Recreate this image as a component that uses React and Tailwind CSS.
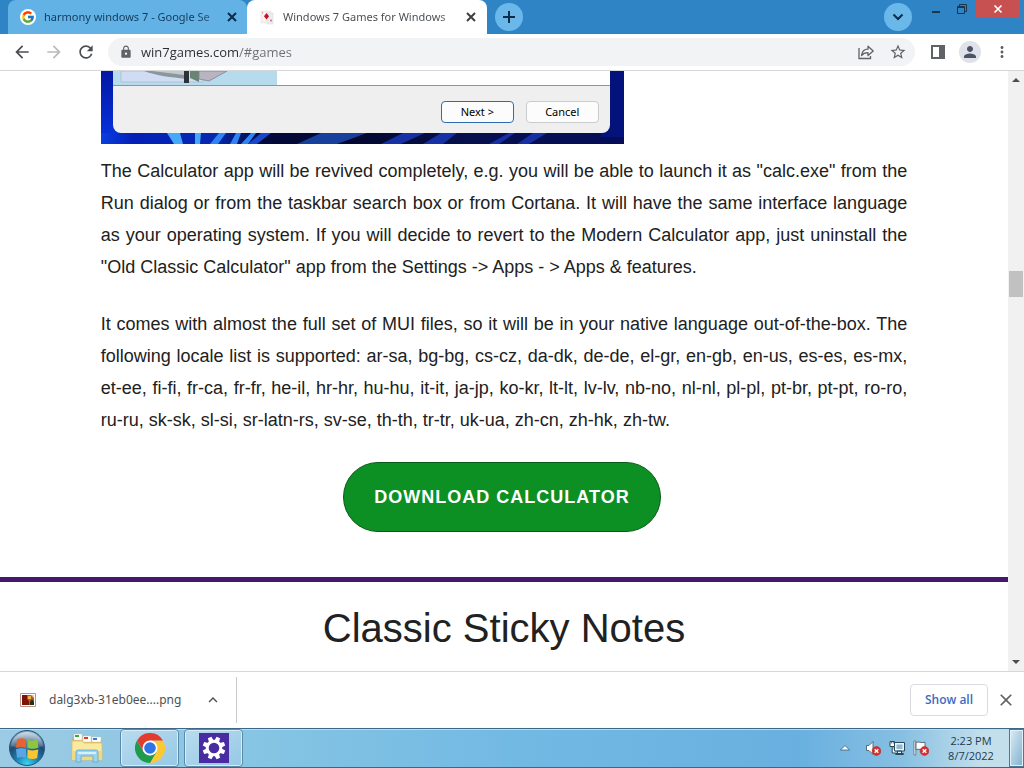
import React from "react";
import { FcGoogle } from "react-icons/fc";
import {
  MdArrowBack,
  MdArrowForward,
  MdRefresh,
  MdLock,
  MdStarBorder,
  MdPerson,
  MdMoreVert,
  MdClose,
  MdKeyboardArrowUp,
} from "react-icons/md";

const chromeFont = "font-['Open_Sans','Noto_Sans',sans-serif]";

function StrokeIcon({ d }) {
  return (
    <svg viewBox="0 0 14 14" className="h-[14px] w-[14px]" fill="none" stroke="currentColor" strokeWidth="2" aria-hidden="true">
      <path d={d} />
    </svg>
  );
}

const CROSS = "M3 3l8 8M11 3l-8 8";
const PLUS = "M7 1v12M1 7h12";
const CHEVRON = "M2.500 4.500 7 9l4.500-4.500";

function CardsIcon() {
  return (
    <svg viewBox="0 0 16 16" className="h-4 w-4 shrink-0" aria-hidden="true">
      <rect x="2" y="2" width="10" height="12" fill="#f4f1f3" stroke="#e6e1e5" strokeWidth=".6" />
      <rect x="8" y="4" width="6" height="11" fill="#ececf0" stroke="#dcd9e0" strokeWidth=".6" />
      <path d="M7.500 4 10 7.200 7.500 10.400 5 7.200z" fill="#c2121f" />
      <path d="M12 10l1 1.500-1 1.600-1-1.600z" fill="#d46a70" />
      <circle cx="3.500" cy="3.800" r=".7" fill="#d8888c" />
    </svg>
  );
}

function ShareIcon() {
  return (
    <svg viewBox="0 0 18 18" className="h-[18px] w-[18px]" fill="none" stroke="#5f6368" strokeWidth="1.3" aria-hidden="true">
      <path d="M2 5v10.500h11.500V13" />
      <path d="M4.500 12.500C5 8.500 7 6.200 11 6.200V3.200L16.200 8l-5.200 4.600V9.700C8 9.700 6 10.500 4.500 12.500z" strokeLinejoin="round" />
    </svg>
  );
}

function TabStrip() {
  return (
    <header className="flex h-[34px] shrink-0 items-stretch bg-[#2e84c5]">
      <nav className="flex items-stretch pl-2" aria-label="Tabs">
        <div className="flex w-[239px] items-center rounded-t-lg bg-[#62b2e6] pr-[7px] pl-3">
          <span className="flex h-4 w-4 shrink-0 items-center justify-center rounded-full bg-white">
            <FcGoogle size={14} />
          </span>
          <a href="#search" className="ml-2 min-w-0 flex-1 bg-linear-to-r from-[#123a5c] from-85% to-[#123a5c]/30 bg-clip-text font-['Noto_Sans',sans-serif] text-[11px] leading-4 whitespace-nowrap text-transparent">
            harmony windows 7 - Google Se
          </a>
          <button aria-label="Close harmony windows 7" className="flex h-4 w-4 shrink-0 items-center justify-center text-[#0c2c48]">
            <StrokeIcon d={CROSS} />
          </button>
        </div>
        <div className="flex w-60 items-center rounded-t-lg bg-white pr-2 pl-3">
          <CardsIcon />
          <a href="#games" className="ml-2 min-w-0 flex-1 bg-linear-to-r from-[#45494d] from-85% to-[#45494d]/40 bg-clip-text font-['Noto_Sans',sans-serif] text-[11px] leading-4 whitespace-nowrap text-transparent">
            Windows 7 Games for Windows
          </a>
          <button aria-label="Close Windows 7 Games" className="flex h-4 w-4 shrink-0 items-center justify-center text-[#3c4043]">
            <StrokeIcon d={CROSS} />
          </button>
        </div>
      </nav>
      <button aria-label="New tab" className="ml-2 flex h-7 w-7 items-center justify-center self-center rounded-full bg-[#6ab8ea] text-[#0c2c48]">
        <StrokeIcon d={PLUS} />
      </button>
      <button aria-label="Search tabs" className="ml-auto flex h-7 w-7 items-center justify-center self-center rounded-full bg-[#6ab8ea] text-[#0c2c48]">
        <StrokeIcon d={CHEVRON} />
      </button>
      <div className="ml-3 flex items-start">
        <button aria-label="Minimize" className="flex h-[18px] w-6 items-center justify-center">
          <svg viewBox="0 0 10 10" className="h-[10px] w-[10px]" aria-hidden="true"><path d="M1 7h8v2H1z" fill="#17364f" /></svg>
        </button>
        <button aria-label="Restore" className="flex h-[18px] w-7 items-center justify-center">
          <svg viewBox="0 0 10 10" className="h-[10px] w-[10px]" fill="none" stroke="#17364f" aria-hidden="true">
            <path d="M.5 2.500h7v7h-7zM.5 3.500h7M2.500 2.500v-2h7v7h-2" />
          </svg>
        </button>
        <div className="pr-1">
          <button aria-label="Close" className="flex h-[18px] w-11 items-center justify-center bg-[#c75050]">
            <svg viewBox="0 0 10 10" className="h-[10px] w-[10px]" stroke="#fff" strokeWidth="1.700" aria-hidden="true">
              <path d="M1.500 1.500l7 7M8.500 1.500l-7 7" />
            </svg>
          </button>
        </div>
      </div>
    </header>
  );
}

function Toolbar() {
  return (
    <div className="flex h-[37px] shrink-0 items-center border-b border-[#d5d7da] bg-white pr-[13px] pl-3 text-[#5f6368]">
      <button aria-label="Back" className="mr-3 text-[#4a4d51]"><MdArrowBack size={20} /></button>
      <button aria-label="Forward" className="mr-3 text-[#b9bbbe]"><MdArrowForward size={20} /></button>
      <button aria-label="Reload" className="mr-3 text-[#4a4d51]"><MdRefresh size={20} /></button>
      <div className="flex h-7 flex-1 items-center rounded-full bg-[#f1f3f4] pr-2 pl-[11px]">
        <MdLock size={14} className="shrink-0" />
        <input
          aria-label="Address"
          defaultValue="win7games.com/#games"
          className="ml-2 block h-5 min-w-0 flex-1 bg-linear-to-r from-[#2b2e31] from-[98px] to-[#6b6f74] to-[98px] bg-clip-text text-[13px] leading-5 text-transparent outline-none"
        />
        <button aria-label="Share" className="mr-[14px]"><ShareIcon /></button>
        <button aria-label="Bookmark"><MdStarBorder size={18} /></button>
      </div>
      <button aria-label="Side panel" className="ml-4">
        <svg viewBox="0 0 14 14" className="h-[14px] w-[14px]" aria-hidden="true">
          <path d="M0 0h14v14H0zM2 2v10h6V2z" fill="#5f6368" fillRule="evenodd" />
        </svg>
      </button>
      <button aria-label="Profile" className="ml-[14px] flex h-[22px] w-[22px] items-center justify-center rounded-full bg-[#dfe2e8] text-[#4b5365]">
        <MdPerson size={18} />
      </button>
      <button aria-label="Menu" className="ml-3"><MdMoreVert size={18} /></button>
    </div>
  );
}

function InstallerShot() {
  return (
    <div className="relative h-[73px] w-[523px] max-w-full overflow-hidden">
      <svg viewBox="0 0 523 73" preserveAspectRatio="none" className="absolute inset-0 h-full w-full" aria-hidden="true">
        <defs>
          <linearGradient id="side" x1="0" x2="0" y1="0" y2="1">
            <stop offset="0" stopColor="#0417a4" />
            <stop offset="1" stopColor="#0630d8" />
          </linearGradient>
          <linearGradient id="bloom" x1="0" x2="1">
            <stop offset="0" stopColor="#0a3ee0" />
            <stop offset=".06" stopColor="#0420b8" />
            <stop offset=".22" stopColor="#0528b0" />
            <stop offset=".3" stopColor="#020a3c" />
            <stop offset=".5" stopColor="#020830" />
            <stop offset=".7" stopColor="#05104e" />
            <stop offset="1" stopColor="#050c58" />
          </linearGradient>
        </defs>
        <path d="M0 0h523v73H0z" fill="url(#bloom)" />
        <path d="M0 0h20v62H0z" fill="url(#side)" />
        <path d="M500 0h23v66h-23z" fill="#04127c" />
        <path d="M66 62h13l3 11h-9zM94 62h6l-1 11h-5z" fill="#46a8f8" />
        <path d="M118 62h7l-8 11h-8zM135 62h5l-4 11h-7zM150 62h5l-8 11h-7z" fill="#2f83f4" />
        <path d="M160 62h10l-14 11h-9z" fill="#1747cc" />
        <path d="M196 73l24-11h46l-30 11z" fill="#17409c" />
        <path d="M280 73l22-11h22l-24 11zM322 73l18-11h16l-14 11zM388 73l20-11h6l-16 11zM416 73l16-11h14l-18 11z" fill="#1730a4" />
      </svg>
      <div className="relative mr-[14px] ml-3 flex h-[62px] flex-col overflow-hidden rounded-b-lg bg-[#efefef]">
        <div className="flex h-[15px] border-b border-[#8d9698] bg-white">
          <svg viewBox="0 0 164 14" className="h-[14px] w-[164px]" aria-hidden="true">
            <path d="M0 0h164v14H0z" fill="#b5dbec" />
            <path d="M8 0h82v11H8z" fill="#cfdcf3" stroke="#a9b8d4" strokeWidth=".7" />
            <path d="M31 0h42v8C58 6 44 5 31 0z" fill="#8b969b" />
            <path d="M39 0h32v4z" fill="#c3cacc" />
            <path d="M77 0h9v11l-9-4z" fill="#678572" />
            <path d="M86 0h28L96 10l-10-2z" fill="#b9b4c2" stroke="#85818b" strokeWidth=".8" />
            <path d="M71 0h5v12h-5z" fill="#2b3338" />
          </svg>
        </div>
        <div className="flex flex-1 items-center justify-end gap-3 pt-1 pr-[11px] font-['Noto_Sans',sans-serif] text-[11px] leading-4 text-black">
          <button className="h-[22px] w-[73px] rounded border border-[#2a6db0] bg-[#fcfcfc]">Next &gt;</button>
          <button className="h-[22px] w-[73px] rounded border border-[#c9cbcd] bg-[#fcfcfc]">Cancel</button>
        </div>
      </div>
    </div>
  );
}

function Scrollbar() {
  return (
    <div className="flex w-4 shrink-0 flex-col items-center bg-[#f1f1f1]" aria-hidden="true">
      <svg viewBox="0 0 16 17" className="h-[17px] w-4"><path d="M4 11l4-4 4 4z" fill="#4d4d4d" /></svg>
      <div className="flex w-full flex-1 flex-col px-px">
        <div className="grow-[183]" />
        <div className="h-[26px] bg-[#c1c1c1]" />
        <div className="grow-[357]" />
      </div>
      <svg viewBox="0 0 16 17" className="h-[17px] w-4"><path d="M4 6l4 4 4-4z" fill="#4d4d4d" /></svg>
    </div>
  );
}

function Page() {
  return (
    <div className="flex min-h-0 flex-1">
      <main className="min-w-0 flex-1 overflow-hidden bg-white font-['Liberation_Sans',Arial,sans-serif] text-[#212121]">
        <article className="mx-auto flex w-4/5 flex-col text-lg leading-8">
          <InstallerShot />
          <p className="mt-[11px] text-justify">
            The Calculator app will be revived completely, e.g. you will be able to launch it as "calc.exe" from the Run dialog or from the taskbar search box or from Cortana. It will have the same interface language as your operating system. If you will decide to revert to the Modern Calculator app, just uninstall the "Old Classic Calculator" app from the Settings -&gt; Apps - &gt; Apps &amp; features.
          </p>
          <p className="mt-[25px] text-justify">
            It comes with almost the full set of MUI files, so it will be in your native language out-of-the-box. The following locale list is supported: ar-sa, bg-bg, cs-cz, da-dk, de-de, el-gr, en-gb, en-us, es-es, es-mx, et-ee, fi-fi, fr-ca, fr-fr, he-il, hr-hr, hu-hu, it-it, ja-jp, ko-kr, lt-lt, lv-lv, nb-no, nl-nl, pl-pl, pt-br, pt-pt, ro-ro, ru-ru, sk-sk, sl-si, sr-latn-rs, sv-se, th-th, tr-tr, uk-ua, zh-cn, zh-hk, zh-tw.
          </p>
          <a href="#download" className="mt-[26px] mr-1 flex h-[70px] items-center self-center rounded-full border border-[#0a5a18] bg-[#0c8f23] px-[30px] text-lg font-bold tracking-[1px] text-white">
            DOWNLOAD CALCULATOR
          </a>
        </article>
        <hr className="mt-[45px] border-t-[5px] border-[#451770]" />
        <h2 className="mt-5 text-center text-[40px] leading-[52px]">Classic Sticky Notes</h2>
      </main>
      <Scrollbar />
    </div>
  );
}

function DownloadBar() {
  return (
    <div className="flex h-[57px] shrink-0 items-center border-t border-[#d5d7da] bg-white pr-2">
      <div className="flex h-[46px] w-[237px] items-center border-r border-[#c8cacd] pr-[14px] pl-5">
        <svg viewBox="0 0 16 14" className="h-[14px] w-4" aria-hidden="true">
          <path d="M.5.5h15v13H.5z" fill="#fff" stroke="#b9948a" />
          <path d="M2 2h12v10H2z" fill="#c2561c" />
          <path d="M2 2h5v4l2 2v4H2z" fill="#7d1209" />
          <path d="M8 3h3v3H8z" fill="#f0b04a" />
          <path d="M10 9l2-3 2 3v3h-4z" fill="#24301a" />
          <path d="M11 2h3v3z" fill="#f2d36c" />
        </svg>
        <a href="#file" className="ml-[13px] flex-1 font-['Noto_Sans',sans-serif] text-xs text-[#4d5155]">dalg3xb-31eb0ee....png</a>
        <button aria-label="Download options" className="text-[#4d5155]"><MdKeyboardArrowUp size={18} /></button>
      </div>
      <button className="ml-auto h-8 w-[78px] rounded border border-[#d8dbe0] text-xs font-semibold text-[#3c6cc4]">Show all</button>
      <button aria-label="Close downloads" className="ml-2 text-[#5f6368]"><MdClose size={20} /></button>
    </div>
  );
}

function StartOrb() {
  return (
    <svg viewBox="0 0 38 38" className="h-[38px] w-[38px]" aria-hidden="true">
      <defs>
        <radialGradient id="orb" cx=".5" cy=".95" r=".95">
          <stop offset="0" stopColor="#38d6f4" />
          <stop offset=".35" stopColor="#1b7cae" />
          <stop offset=".65" stopColor="#1f4a70" />
          <stop offset="1" stopColor="#8fb2cc" />
        </radialGradient>
        <linearGradient id="gloss" x1="0" y1="0" x2="0" y2="1">
          <stop offset="0" stopColor="#fff" stopOpacity=".6" />
          <stop offset="1" stopColor="#fff" stopOpacity=".1" />
        </linearGradient>
      </defs>
      <circle cx="19" cy="19" r="17.500" fill="url(#orb)" stroke="#24557c" />
      <path d="M3 17C4 8 11 3 19 3s15 5 16 14c-9 4-22 4-32 0z" fill="url(#gloss)" />
      <path d="M9 10.500c3.300-1.600 6-1.600 9-.3v8.300c-3.300-1-6.500-.9-10 .3z" fill="#e8642c" />
      <path d="M19.500 10.800c3 1.200 6.500 1.200 10-.2l.8 8.200c-3.800 1.300-7.500 1-10.800-.1z" fill="#8fc63d" />
      <path d="M8 20.200c3.500-1.200 6.700-1.200 10-.1v8.700c-2.900-1.300-5.600-1.200-9 .3z" fill="#5aa5e2" />
      <path d="M19.500 20.500c3.300 1.100 6.800 1.200 10.800.1l-1.100 8.300c-3.300 1.400-6.700 1.200-9.700 0z" fill="#fbc52e" />
    </svg>
  );
}

function FolderIcon() {
  return (
    <svg viewBox="0 0 34 30" className="h-[30px] w-[34px]" aria-hidden="true">
      <path d="M3 4h8l2 2h18v20H3z" fill="#e8c766" stroke="#c3a04c" strokeWidth=".7" />
      <path d="M4 1h8v6H4z" fill="#fff" stroke="#ccc6b0" strokeWidth=".5" /><path d="M5 2h4v2H5z" fill="#3da447" />
      <path d="M13 3h8v6h-8z" fill="#fff" stroke="#ccc6b0" strokeWidth=".5" /><path d="M14 4h4v2h-4z" fill="#d8402c" />
      <path d="M22 4h9v5h-9z" fill="#fff" stroke="#ccc6b0" strokeWidth=".5" /><path d="M23 5h4v2h-4z" fill="#3979cf" />
      <path d="M2 8h10l2 2h18v17H2z" fill="#fae9a0" stroke="#d8b95e" strokeWidth=".7" />
      <path d="M2 18h30v9H2z" fill="#f2d880" />
      <path d="M6 29V19q0-2 2-2h18q2 0 2 2v10h-5v-6H11v6z" fill="#9bd3f1" stroke="#5ea8d3" strokeWidth=".8" />
      <path d="M8 19h18v2H8z" fill="#d5f0fc" />
    </svg>
  );
}

function ChromeIcon() {
  return (
    <svg viewBox="0 0 48 48" className="h-[30px] w-[30px]" aria-hidden="true">
      <path d="M34.400 30 24 48A24 24 0 0 0 44.800 12H24z" fill="#fcc934" />
      <path d="M24 36 34.400 30 24 48A24 24 0 0 1 3.200 12L13.600 30z" fill="#1e9b4b" />
      <path d="M24 12H44.800A24 24 0 0 0 3.200 12L13.600 30z" fill="#e33b2e" />
      <circle cx="24" cy="24" r="12" fill="#fff" />
      <circle cx="24" cy="24" r="9.300" fill="#2f73e8" />
    </svg>
  );
}

function SettingsIcon() {
  return (
    <svg viewBox="0 0 30 30" className="h-[30px] w-[30px]" aria-hidden="true">
      <path d="M0 0h30v30H0z" fill="#4a2ca2" />
      <g fill="#fff">
        {[22.5, 67.5, 112.5, 157.5, 202.5, 247.5, 292.5, 337.5].map((angle) => (
          <path key={angle} d="M12.600 8 13.100 3.600h3.800l.5 4.400z" transform={`rotate(${angle} 15 15)`} />
        ))}
      </g>
      <circle cx="15" cy="15" r="6.800" fill="none" stroke="#fff" strokeWidth="3" />
    </svg>
  );
}

function ErrorBadge() {
  return (
    <g>
      <circle cx="11.500" cy="11" r="4.400" fill="#d8302c" stroke="#a51e1c" strokeWidth=".5" />
      <path d="M9.700 9.200l3.600 3.600M13.300 9.200l-3.600 3.600" stroke="#fff" strokeWidth="1.400" />
    </g>
  );
}

function Tray() {
  return (
    <div className="ml-auto flex items-center gap-2">
      <button aria-label="Show hidden icons" className="mr-1">
        <svg viewBox="0 0 16 16" className="h-4 w-4" aria-hidden="true">
          <path d="M3.500 10 8 5.500l4.500 4.500z" fill="#fff" stroke="#3b5a70" strokeWidth=".8" />
        </svg>
      </button>
      <button aria-label="Volume">
        <svg viewBox="0 0 16 16" className="h-4 w-4" aria-hidden="true">
          <path d="M1.500 5.500h2.500L8 1.500v13L4 10.500H1.500z" fill="#fff" stroke="#4a6070" strokeWidth=".9" />
          <ErrorBadge />
        </svg>
      </button>
      <button aria-label="Network">
        <svg viewBox="0 0 16 16" className="h-4 w-4" aria-hidden="true">
          <path d="M5.500 2.500h10v8.500h-10zM8.500 11h4v2.500h-4zM6.500 13.500h8v1h-8z" fill="#eef6fa" stroke="#29485e" />
          <path d="M7.500 4.500h6V9h-6z" fill="#8db9d6" />
          <path d="M1 1.500h4.500v5H1zM3.200 6.500V13h3" fill="#fff" stroke="#29485e" />
          <path d="M2.300 1v2.500M4.200 1v2.500" stroke="#29485e" strokeWidth=".8" />
        </svg>
      </button>
      <button aria-label="Action center">
        <svg viewBox="0 0 16 16" className="h-4 w-4" aria-hidden="true">
          <path d="M1 1h1.800v14H1z" fill="#fff" stroke="#4a6070" strokeWidth=".7" />
          <path d="M3 2.500c3-1.500 5 1 9-.2v7.200c-4 1.200-6-1.300-9 .2z" fill="#fff" stroke="#4a6070" strokeWidth=".9" />
          <ErrorBadge />
        </svg>
      </button>
      <time className="w-[68px] text-center text-[11px] leading-[15px] text-[#1f3a50]">
        2:23 PM<br />8/7/2022
      </time>
    </div>
  );
}

function Taskbar() {
  const task =
    "flex w-[59px] items-center justify-center rounded-sm border border-[#5b8aa8] bg-linear-to-br from-[#b8dcee] to-[#96c8e6] shadow-[inset_0_0_0_1px_#d8edf7]";
  return (
    <footer className="flex h-10 shrink-0 items-stretch border-t border-b border-[#3d6787] bg-[linear-gradient(to_right,#9ccbe4_0%,#86c5e3_25%,#72b9e4_50%,#69b0e0_78%,#86bfe2_88%,#c3dfec_96%)] shadow-[inset_0_1px_0_#b9dcf0]">
      <button aria-label="Start" className="flex w-[54px] items-center justify-center"><StartOrb /></button>
      <button aria-label="File Explorer" className="mr-1 ml-1 flex w-[58px] items-center justify-center"><FolderIcon /></button>
      <button aria-label="Google Chrome" className={task}><ChromeIcon /></button>
      <button aria-label="Settings" className={`ml-[5px] ${task}`}><SettingsIcon /></button>
      <Tray />
      <button aria-label="Show desktop" className="ml-1 w-[15px] border border-[#4c7896] bg-linear-to-br from-[#dcecf4] to-[#7fb0cf] shadow-[inset_0_0_0_1px_#e0f0f8]" />
    </footer>
  );
}

export default function App() {
  return (
    <div className={`flex h-screen flex-col overflow-hidden bg-white ${chromeFont}`}>
      <TabStrip />
      <Toolbar />
      <Page />
      <DownloadBar />
      <Taskbar />
    </div>
  );
}
